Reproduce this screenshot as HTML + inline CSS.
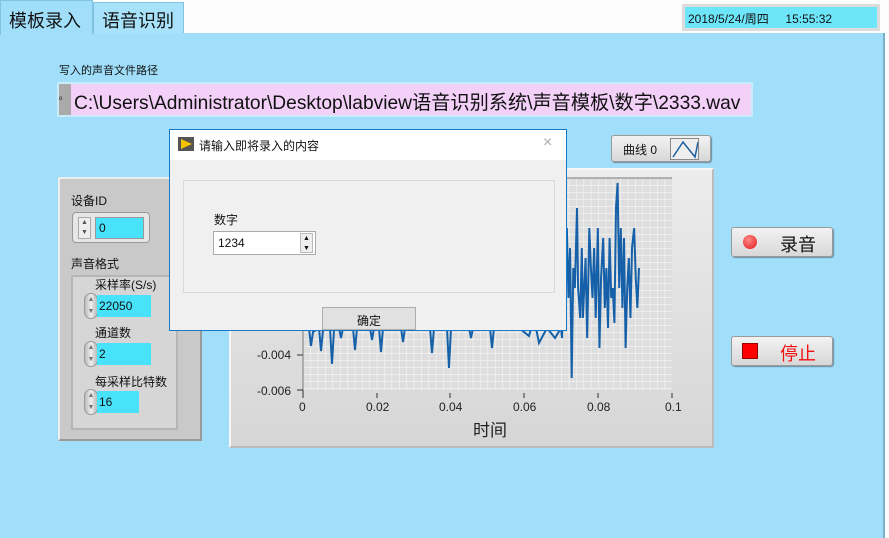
<!DOCTYPE html>
<html><head><meta charset="utf-8"><style>
*{box-sizing:border-box;margin:0;padding:0}
body{width:889px;height:538px;overflow:hidden;background:#fdfdfd;font-family:"Liberation Sans","Noto Sans CJK SC",sans-serif;position:relative;color:#111}
.abs{position:absolute}
.main{left:0;top:33px;width:885px;height:505px;background:#a0defa;border-right:2px solid #7ab0c8}
.tab{top:0;height:35px;font-size:18px;padding:6px 8px;border:1px solid #7fc3e0;border-bottom:none}
.cyan{background:#48e2fa}
.spin{width:14px;height:26px;border-radius:7px;background:linear-gradient(90deg,#bbb,#eee,#bbb);border:1px solid #999;font-size:7px;color:#777;text-align:center;line-height:12px}
.btn{background:linear-gradient(#f2f2f2,#d8d8d8);border:1px solid #9a9a9a;border-radius:3px;box-shadow:1px 1px 1px #6a8ea0}
</style></head><body>
<div class="abs main"></div>
<div class="abs tab" style="left:0;width:93px;background:#a0defa;">模板录入</div>
<div class="abs tab" style="left:93px;width:91px;top:2px;height:31px;background:#a8e2fa;padding-top:4px">语音识别</div>
<div class="abs" style="left:682px;top:4px;width:198px;height:27px;background:#dcdcdc;padding:3px"><div style="background:#6ee6fa;height:21px;font-size:12px;padding:3px 3px">2018/5/24/周四&nbsp;&nbsp;&nbsp;&nbsp;&nbsp;15:55:32</div></div>

<div class="abs" style="left:59px;top:62px;font-size:11px">写入的声音文件路径</div>
<div class="abs" style="left:57px;top:82px;width:696px;height:35px;background:#c8ecf8;padding:2px">
 <div style="display:flex;height:31px"><div style="width:12px;background:#aaa;font-size:9px;padding-top:10px">ᵒ</div><div style="flex:1;background:#f2d0f8;font-size:19.2px;padding:3px 3px;white-space:nowrap">C:\Users\Administrator\Desktop\labview语音识别系统\声音模板\数字\2333.wav</div></div></div>

<div class="abs" style="left:58px;top:177px;width:144px;height:264px;background:#c9c9c9;border:2px solid #999;border-left-color:#eee;border-top-color:#eee"></div>
<div class="abs" style="left:71px;top:192px;font-size:12px">设备ID</div>
<div class="abs" style="left:72px;top:212px;width:78px;height:31px;background:#e6e6e6;border:1px solid #999;border-radius:4px"></div>
<div class="abs" style="left:78px;top:217px;width:13px;height:22px;background:#eee;border:1px solid #aaa;font-size:7px;line-height:10px;text-align:center;color:#555">▲<br>▼</div>
<div class="abs cyan" style="left:95px;top:217px;width:49px;height:22px;border:1px solid #999;font-size:12px;padding:3px">0</div>
<div class="abs" style="left:71px;top:255px;font-size:12px">声音格式</div>
<div class="abs" style="left:71px;top:275px;width:107px;height:155px;background:#d6d6d6;border:2px solid #b5b5b5"></div>
<div class="abs" style="left:95px;top:276px;font-size:12px">采样率(S/s)</div>
<div class="abs spin" style="left:84px;top:293px">▲<br>▼</div>
<div class="abs cyan" style="left:97px;top:295px;width:54px;height:22px;font-size:12px;padding:4px 2px">22050</div>
<div class="abs" style="left:95px;top:324px;font-size:12px">通道数</div>
<div class="abs spin" style="left:84px;top:341px">▲<br>▼</div>
<div class="abs cyan" style="left:97px;top:343px;width:54px;height:22px;font-size:12px;padding:4px 2px">2</div>
<div class="abs" style="left:95px;top:373px;font-size:12px">每采样比特数</div>
<div class="abs spin" style="left:84px;top:389px">▲<br>▼</div>
<div class="abs cyan" style="left:97px;top:391px;width:42px;height:22px;font-size:12px;padding:4px 2px">16</div>

<div class="abs btn" style="left:611px;top:135px;width:100px;height:27px;font-size:12px;padding:5px 11px">曲线 0</div>
<div class="abs" style="left:670px;top:138px;width:29px;height:22px;background:#eee;border:1px solid #888"><svg width="27" height="20"><polyline points="2,18 12,3 24,18 27,3" fill="none" stroke="#1a5fa0" stroke-width="1.5"/></svg></div>

<div class="abs" style="left:229px;top:168px;width:485px;height:280px;background:linear-gradient(#ececec,#d6d6d6);border:2px solid #f6f6f6;border-right-color:#bbb;border-bottom-color:#bbb"></div>
<svg class="abs" style="left:229px;top:168px" width="485" height="280">
<defs><pattern id="g" x="74" y="10" width="7.38" height="7" patternUnits="userSpaceOnUse"><rect width="7.38" height="7" fill="#dedede"/><path d="M0 0H7.38M0 0V7" stroke="#f6f6f6" stroke-width="1.2"/></pattern></defs>
<rect x="74" y="10" width="369" height="212" fill="url(#g)"/>
<path d="M74 10V222M74 10H443" stroke="#777" stroke-width="1"/>
<g font-size="12" fill="#222" font-family="Liberation Sans">
<text x="28" y="191">-0.004</text><text x="28" y="227">-0.006</text>
<path d="M68 187H74M68 222H74M74 222V230M148 225V230M221 225V230M295 225V230M369 225V230M443 225V230" stroke="#333"/>
<text x="70" y="243">0</text><text x="137" y="243">0.02</text><text x="210" y="243">0.04</text><text x="284" y="243">0.06</text><text x="358" y="243">0.08</text><text x="436" y="243">0.1</text>
<text x="244" y="268" font-size="17" font-family="Noto Sans CJK SC">时间</text>
</g>
<polyline fill="none" stroke="#1560a8" stroke-width="2" points="80,160 82,178 84,164 90,160 92,183 94,162 101,160 103,196 105,162 110,160 112,170 114,160 124,160 126,182 128,160 141,160 143,172 145,160 150,160 152,184 154,160 172,160 174,174 176,160 201,160 203,185 205,160 218,160 220,200 222,160 240,160 242,170 244,160 261,160 263,180 265,160 290,160 300,168 305,150 310,175 318,160 326,170 332,160"/>
<g transform="translate(332,0) scale(0.534,1) translate(-290,0)">
<polyline fill="none" stroke="#1560a8" stroke-width="2" vector-effect="non-scaling-stroke" points="290,160 292,170 294,110 298,140 301,60 304,130 307,80 310,210 313,100 316,120 320,40 322,120 326,150 329,80 331,150 336,90 339,170 343,60 346,100 349,130 352,80 355,150 359,60 362,180 365,110 369,70 372,140 375,100 378,160 381,70 384,130 387,120 390,155 393,40 396,15 399,120 402,60 405,140 408,70 411,180 414,120 417,90 420,150 423,80 427,60 430,110 433,140 436,100"/>
</g>
</svg>

<div class="abs btn" style="left:731px;top:227px;width:102px;height:30px;font-size:18px;padding:3px 0 0 48px">录音</div>
<div class="abs" style="left:743px;top:235px;width:14px;height:14px;border-radius:50%;background:radial-gradient(circle at 40% 35%,#ff8888,#e01818)"></div>
<div class="abs btn" style="left:731px;top:336px;width:102px;height:30px;font-size:18px;padding:3px 0 0 48px;color:#f01010">停止</div>
<div class="abs" style="left:742px;top:343px;width:16px;height:16px;background:#f00;border:1px solid #900"></div>

<div class="abs" style="left:169px;top:129px;width:398px;height:202px;background:#f0f0f0;border:1px solid #1979ca"></div>
<div class="abs" style="left:170px;top:130px;width:396px;height:30px;background:#fff"></div>
<div class="abs" style="left:178px;top:137px;width:16px;height:14px;background:#555"><svg width="16" height="14"><path d="M3 2L14 7L3 12Z" fill="#f5c400"/></svg></div>
<div class="abs" style="left:199px;top:137px;font-size:12px">请输入即将录入的内容</div>
<div class="abs" style="left:543px;top:134px;font-size:16px;color:#aaa">×</div>
<div class="abs" style="left:183px;top:180px;width:372px;height:113px;border:1px solid #d8d8d8"></div>
<div class="abs" style="left:214px;top:211px;font-size:12px">数字</div>
<div class="abs" style="left:213px;top:231px;width:103px;height:24px;background:#fff;border:1px solid #aaa;font-size:12px;padding:4px 4px">1234</div>
<div class="abs" style="left:300px;top:233px;width:13px;height:20px;font-size:7px;line-height:10px;text-align:center;background:#eee;border:1px solid #bbb">▲<br>▼</div>
<div class="abs" style="left:322px;top:307px;width:94px;height:23px;background:#e1e1e1;border:1px solid #adadad;font-size:12px;text-align:center;padding-top:4px">确定</div>
</body></html>
